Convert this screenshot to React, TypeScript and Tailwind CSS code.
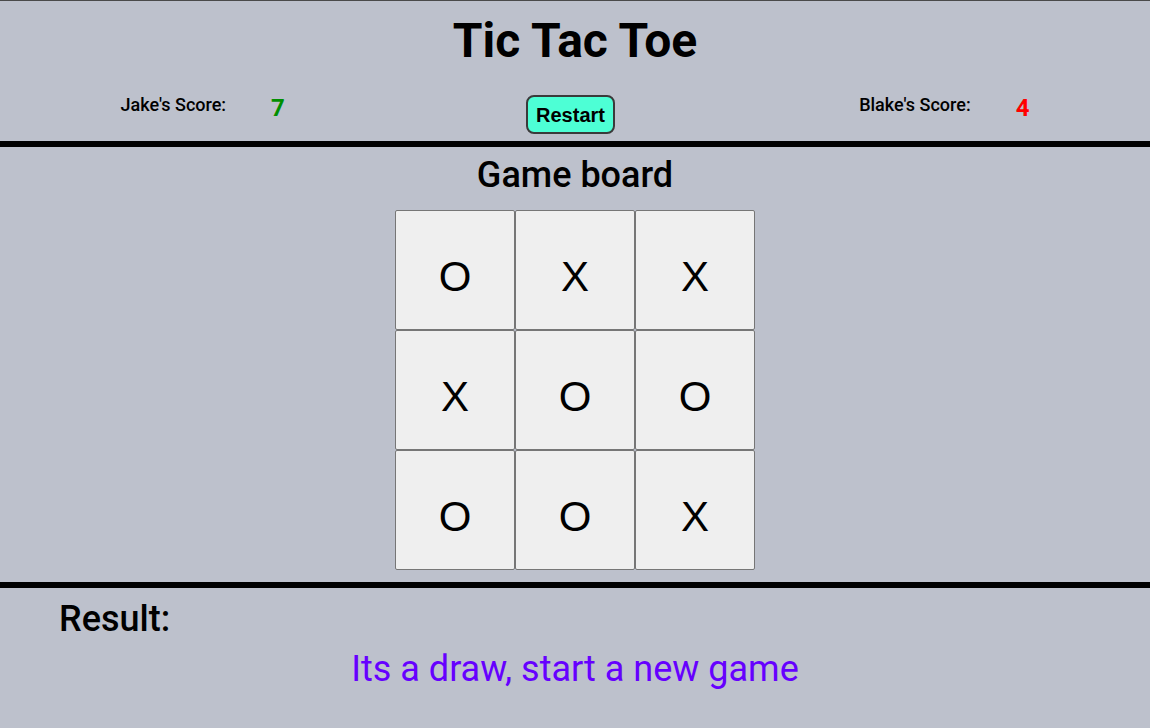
import React from "react";

const board = ["O", "X", "X", "X", "O", "O", "O", "O", "X"];

function Score({ name, score, color }: { name: string; score: number; color: string }) {
  return (
    <div className="flex items-start gap-[45px] pt-px">
      <span className="text-[18px] font-medium leading-none text-black">{name}</span>
      <span className={`text-[24px] font-bold leading-none ${color}`}>{score}</span>
    </div>
  );
}

export default function App() {
  return (
    <div className="min-h-screen bg-[#bdc1cc] border-t border-[#4a4a4a] font-['Roboto',sans-serif] text-black">
      <header className="pt-[16px]">
        <h1 className="text-center text-[48px] font-bold leading-none">Tic Tac Toe</h1>
        <div className="mt-[30px] flex items-start justify-around">
          <Score name="Jake's Score:" score={7} color="text-[#008f00]" />
          <button className="flex h-[39px] w-[89px] items-center justify-center rounded-[8px] border-2 border-[#3a3a3a] bg-[#4dffd5] font-['Liberation_Sans',Arial,sans-serif] text-[20px] font-bold leading-none text-black">
            Restart
          </button>
          <div className="pl-[3px]">
            <Score name="Blake's Score:" score={4} color="text-[#ff0000]" />
          </div>
        </div>
      </header>
      <div className="mt-[7px] h-[6px] bg-black" />
      <section className="flex flex-col items-center">
        <h2 className="mt-[10px] text-[36px] font-medium leading-none">Game board</h2>
        <div className="mt-[17px] grid grid-cols-[repeat(3,120px)]">
          {board.map((v, i) => (
            <button
              key={i}
              className="flex h-[120px] w-[120px] items-center justify-center rounded-[2px] border border-[#767676] bg-[#efefef] pt-[13px] font-['Liberation_Sans',Arial,sans-serif] text-[42px] leading-none text-black"
            >
              {v}
            </button>
          ))}
        </div>
      </section>
      <div className="mt-[12px] h-[6px] bg-black" />
      <section className="pb-[40px]">
        <h2 className="mt-[13px] pl-[59px] text-[36px] font-medium leading-none">Result:</h2>
        <p className="mt-[14px] text-center text-[36px] leading-none text-[#6600ff]">
          Its a draw, start a new game
        </p>
      </section>
    </div>
  );
}
